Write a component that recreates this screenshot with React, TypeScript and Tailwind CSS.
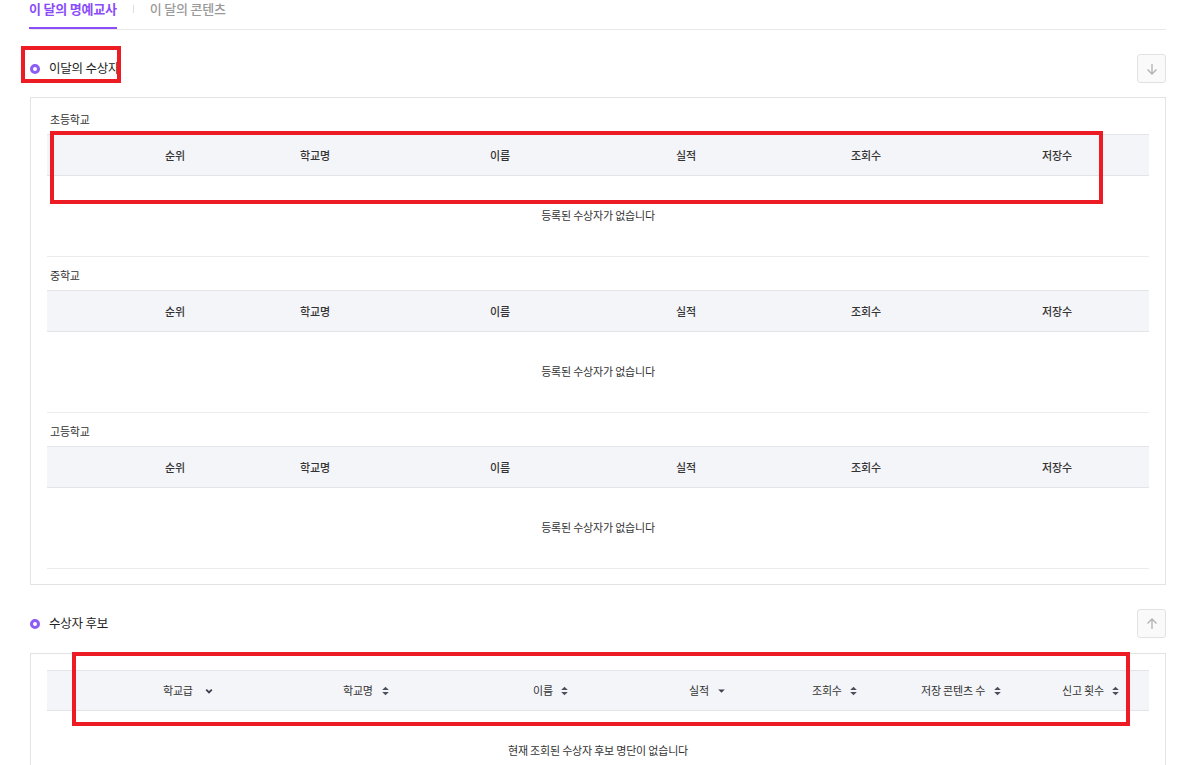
import React from 'react';

const FONT = "font-['Noto_Sans_CJK_KR','Noto_Sans',sans-serif]";

const rankCols = [
  { label: '순위', cls: 'ml-[68px]' },
  { label: '학교명', cls: 'ml-[20px]' },
  { label: '이름', cls: 'ml-[65px]' },
  { label: '실적', cls: 'ml-[66px]' },
  { label: '조회수', cls: 'ml-[60px]' },
  { label: '저장수', cls: 'ml-[71px]' },
];

const SortBoth = () => (
  <svg width="7" height="10" viewBox="0 0 7 10" className="shrink-0">
    <path d="M3.5 0.8 L6.8 4 H0.2 Z" fill="#4b4f5c" />
    <path d="M3.5 9.2 L6.8 6 H0.2 Z" fill="#4b4f5c" />
  </svg>
);

const SortDown = () => (
  <svg width="7" height="10" viewBox="0 0 7 10" className="shrink-0">
    <path d="M0.2 3.5 H6.8 L3.5 6.8 Z" fill="#3d4150" />
  </svg>
);

const Chevron = () => (
  <svg width="8" height="10" viewBox="0 0 8 10" className="shrink-0">
    <path d="M1.2 3.6 L4 6.4 L6.8 3.6" stroke="#3d4150" strokeWidth="1.8" fill="none" />
  </svg>
);

const candidateCols: { label: string; icon: React.ReactNode; gap: string }[] = [
  { label: '학교급', icon: <Chevron />, gap: 'gap-[12px]' },
  { label: '학교명', icon: <SortBoth />, gap: 'gap-[9px]' },
  { label: '이름', icon: <SortBoth />, gap: 'gap-[8px]' },
  { label: '실적', icon: <SortDown />, gap: 'gap-[9px]' },
  { label: '조회수', icon: <SortBoth />, gap: 'gap-[8px]' },
  { label: '저장 콘텐츠 수', icon: <SortBoth />, gap: 'gap-[9px]' },
  { label: '신고 횟수', icon: <SortBoth />, gap: 'gap-[8px]' },
];

const Dot = () => (
  <span className="w-[10px] h-[10px] rounded-full border-[3px] border-[#8b5cf6] bg-white shrink-0" />
);

const ArrowButton = ({ dir }: { dir: 'up' | 'down' }) => (
  <button className="w-[29px] h-[29px] rounded-[3px] border border-[#e2e2e2] bg-[#fafafa] flex items-center justify-center">
    <svg width="14" height="14" viewBox="0 0 14 14">
      {dir === 'down' ? (
        <path d="M7 2 V12 M2.5 7.5 L7 12 L11.5 7.5" stroke="#b4b4b4" strokeWidth="1.4" fill="none" />
      ) : (
        <path d="M7 12 V2 M2.5 6.5 L7 2 L11.5 6.5" stroke="#b4b4b4" strokeWidth="1.4" fill="none" />
      )}
    </svg>
  </button>
);

const RankSection = ({ title, first }: { title: string; first?: boolean }) => (
  <div className={`${first ? 'pt-[13px]' : 'pt-[10px]'} border-b border-[#ececec]`}>
    <div className="h-[16px] flex items-center pl-[3px] text-[11px] tracking-[-0.2px] text-[#333]">{title}</div>
    <div className="mt-[7px] h-[42px] flex items-center bg-[#f4f5f9] border-y border-[#e3e4e8]">
      {rankCols.map((c) => (
        <div key={c.label} className={`${c.cls} w-[120px] text-center text-[11px] tracking-[-0.2px] font-medium text-[#333]`}>
          {c.label}
        </div>
      ))}
    </div>
    <div className="h-[80px] pb-[1px] flex items-center justify-center text-[11px] tracking-[-0.2px] text-[#333]">
      등록된 수상자가 없습니다
    </div>
  </div>
);

export default function App() {
  return (
    <div className={`relative w-[1201px] h-[765px] overflow-hidden bg-white ${FONT}`}>
      <div className="ml-[30px] w-[1136px]">
        {/* Tabs */}
        <div className="h-[30px] flex items-start border-b border-[#e8e8e8]">
          <div className="relative h-[29px] -ml-[1px] text-[13px] font-bold text-[#8b4dfa] tracking-[-0.2px] leading-[17px]">
            이 달의 명예교사
            <span className="absolute left-0 right-0 bottom-0 h-[2px] bg-[#8b4dfa]" />
          </div>
          <span className="ml-[16px] mt-[5px] w-[1px] h-[8px] bg-[#dcdcdc]" />
          <div className="ml-[16px] text-[13px] font-medium text-[#9a9a9a] tracking-[-0.2px] leading-[17px]">
            이 달의 콘텐츠
          </div>
        </div>

        {/* Winners */}
        <div className="mt-[24px] h-[29px] flex items-center justify-between">
          <div className="flex items-center gap-[9px]">
            <Dot />
            <span className="text-[12.5px] text-[#222] tracking-[-0.2px]">이달의 수상자</span>
          </div>
          <ArrowButton dir="down" />
        </div>
        <div className="mt-[14px] border border-[#e3e3e3] px-[16px] pb-[15px]">
          <RankSection title="초등학교" first />
          <RankSection title="중학교" />
          <RankSection title="고등학교" />
        </div>

        {/* Candidates */}
        <div className="mt-[24px] h-[29px] flex items-center justify-between">
          <div className="flex items-center gap-[9px]">
            <Dot />
            <span className="text-[12.5px] text-[#222] tracking-[-0.2px]">수상자 후보</span>
          </div>
          <ArrowButton dir="up" />
        </div>
        <div className="mt-[15px] border border-[#e3e3e3] px-[16px] pt-[16px] pb-[16px]">
          <div className="h-[41px] grid grid-cols-[180px_190px_156px_123px_109px_141px_1fr] items-center pl-[116px] bg-[#f4f5f9] border-y border-[#e3e4e8]">
            {candidateCols.map((c) => (
              <div key={c.label} className={`flex items-center ${c.gap} text-[11px] tracking-[-0.2px] text-[#333]`}>
                <span>{c.label}</span>
                {c.icon}
              </div>
            ))}
          </div>
          <div className="h-[78px] flex items-center justify-center text-[11px] tracking-[-0.2px] text-[#333]">
            현재 조회된 수상자 후보 명단이 없습니다
          </div>
        </div>
      </div>

      {/* Annotation boxes */}
      <div className="absolute left-[21px] top-[46px] w-[100px] h-[37px] border-[4px] border-[#ed1c24]" />
      <div className="absolute left-[50px] top-[131px] w-[1053px] h-[73px] border-[4px] border-[#ed1c24]" />
      <div className="absolute left-[72px] top-[652px] w-[1058px] h-[74px] border-[4px] border-[#ed1c24]" />
    </div>
  );
}
